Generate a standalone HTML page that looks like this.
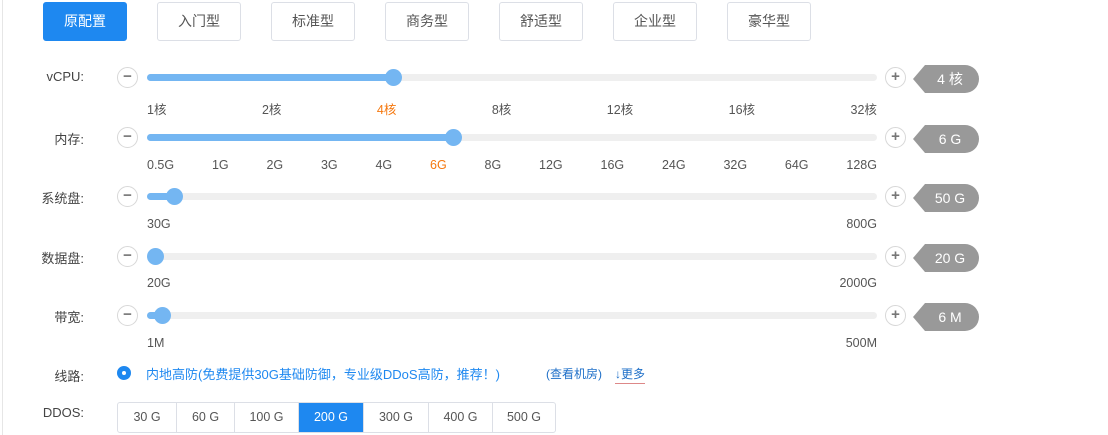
<!DOCTYPE html>
<html><head><meta charset="utf-8"><style>
*{box-sizing:border-box;margin:0;padding:0}
body{width:1108px;height:435px;background:#fff;font-family:"Liberation Sans","Noto Sans CJK SC",sans-serif;color:#333;position:relative;overflow:hidden;font-size:12px}
.vl{position:absolute;left:2px;top:0;width:1px;height:435px;background:#e6e6e6}
.btn{position:absolute;top:2px;width:84px;height:39px;border:1px solid #dcdfe6;border-radius:3px;font-size:14px;line-height:37px;text-align:center;color:#555}
.btn.on{background:#1e88f0;border-color:#1e88f0;color:#fff}
.lab{position:absolute;right:1024px;font-size:13px;color:#444;white-space:nowrap}
.circ{position:absolute;width:21px;height:21px;border:1px solid #d8d8d8;border-radius:50%;background:#fff;text-align:center;line-height:18px;font-size:15px;color:#777;font-weight:bold}
.track{position:absolute;left:147px;width:730px;height:7px;border-radius:4px;background:#efefef}
.fill{position:absolute;left:0;top:0;height:7px;border-radius:4px;background:#74b6f2}
.knob{position:absolute;top:-5px;width:17px;height:17px;border-radius:50%;background:#74b6f2;margin-left:-8px}
.ticks{position:absolute;left:147px;width:730px;display:flex;justify-content:space-between;font-size:12.5px;color:#555}
.ticks .o{color:#f5780f}
.badge{position:absolute;left:913px;width:66px;height:28px;background:#999;color:#fff;font-size:14px;line-height:28px;text-align:center;padding-left:8px;border-radius:0 14px 14px 0;clip-path:polygon(12px 0,100% 0,100% 100%,12px 100%,0 50%)}
.dd{position:absolute;top:402px;left:117px;height:31px;display:flex;border:1px solid #dcdfe6;border-radius:3px}
.dd div{height:29px;line-height:29px;text-align:center;border-left:1px solid #dcdfe6;font-size:12.5px;color:#555}
.dd div:first-child{border-left:0}
.dd .on{background:#1e88f0;color:#fff}
</style></head><body>
<div class="vl"></div>
<div class="btn on" style="left:43px">原配置</div>
<div class="btn" style="left:157px">入门型</div>
<div class="btn" style="left:271px">标准型</div>
<div class="btn" style="left:385px">商务型</div>
<div class="btn" style="left:499px">舒适型</div>
<div class="btn" style="left:613px">企业型</div>
<div class="btn" style="left:727px">豪华型</div>

<div class="lab" style="top:69px">vCPU:</div>
<div class="circ" style="left:117px;top:67px">−</div>
<div class="track" style="top:74px"><div class="fill" style="width:246px"></div><div class="knob" style="left:246px"></div></div>
<div class="circ" style="left:885px;top:67px">+</div>
<div class="badge" style="top:65px">4 核</div>
<div class="ticks" style="top:99px"><span>1核</span><span>2核</span><span class="o">4核</span><span>8核</span><span>12核</span><span>16核</span><span>32核</span></div>

<div class="lab" style="top:129px">内存:</div>
<div class="circ" style="left:117px;top:127px">−</div>
<div class="track" style="top:134px"><div class="fill" style="width:306px"></div><div class="knob" style="left:306px"></div></div>
<div class="circ" style="left:885px;top:127px">+</div>
<div class="badge" style="top:125px">6 G</div>
<div class="ticks" style="top:158px"><span>0.5G</span><span>1G</span><span>2G</span><span>3G</span><span>4G</span><span class="o">6G</span><span>8G</span><span>12G</span><span>16G</span><span>24G</span><span>32G</span><span>64G</span><span>128G</span></div>

<div class="lab" style="top:188px">系统盘:</div>
<div class="circ" style="left:117px;top:186px">−</div>
<div class="track" style="top:193px"><div class="fill" style="width:27px"></div><div class="knob" style="left:27px"></div></div>
<div class="circ" style="left:885px;top:186px">+</div>
<div class="badge" style="top:184px">50 G</div>
<div class="ticks" style="top:217px"><span>30G</span><span>800G</span></div>

<div class="lab" style="top:248px">数据盘:</div>
<div class="circ" style="left:117px;top:246px">−</div>
<div class="track" style="top:253px"><div class="knob" style="left:8px"></div></div>
<div class="circ" style="left:885px;top:246px">+</div>
<div class="badge" style="top:244px">20 G</div>
<div class="ticks" style="top:276px"><span>20G</span><span>2000G</span></div>

<div class="lab" style="top:307px">带宽:</div>
<div class="circ" style="left:117px;top:305px">−</div>
<div class="track" style="top:312px"><div class="fill" style="width:15px"></div><div class="knob" style="left:15px"></div></div>
<div class="circ" style="left:885px;top:305px">+</div>
<div class="badge" style="top:303px">6 M</div>
<div class="ticks" style="top:336px"><span>1M</span><span>500M</span></div>

<div class="lab" style="top:366px">线路:</div>
<div style="position:absolute;left:117px;top:366px;width:14px;height:14px;border-radius:50%;background:#1e88f0"><div style="position:absolute;left:5px;top:5px;width:4px;height:4px;border-radius:50%;background:#fff"></div></div>
<div style="position:absolute;left:146px;top:364px;font-size:13px;color:#1e88f0">内地高防(免费提供30G基础防御，专业级DDoS高防，推荐！)</div>
<div style="position:absolute;left:546px;top:365px;font-size:12px;color:#1e6fc8">(查看机房)</div>
<div style="position:absolute;left:615px;top:365px;font-size:12px;color:#1e6fc8;border-bottom:1px solid #d88;padding-bottom:1px">↓更多</div>

<div class="lab" style="top:405px">DDOS:</div>
<div class="dd"><div style="width:58px">30 G</div><div style="width:58px">60 G</div><div style="width:64px">100 G</div><div class="on" style="width:65px">200 G</div><div style="width:65px">300 G</div><div style="width:64px">400 G</div><div style="width:63px">500 G</div></div>
</body></html>
